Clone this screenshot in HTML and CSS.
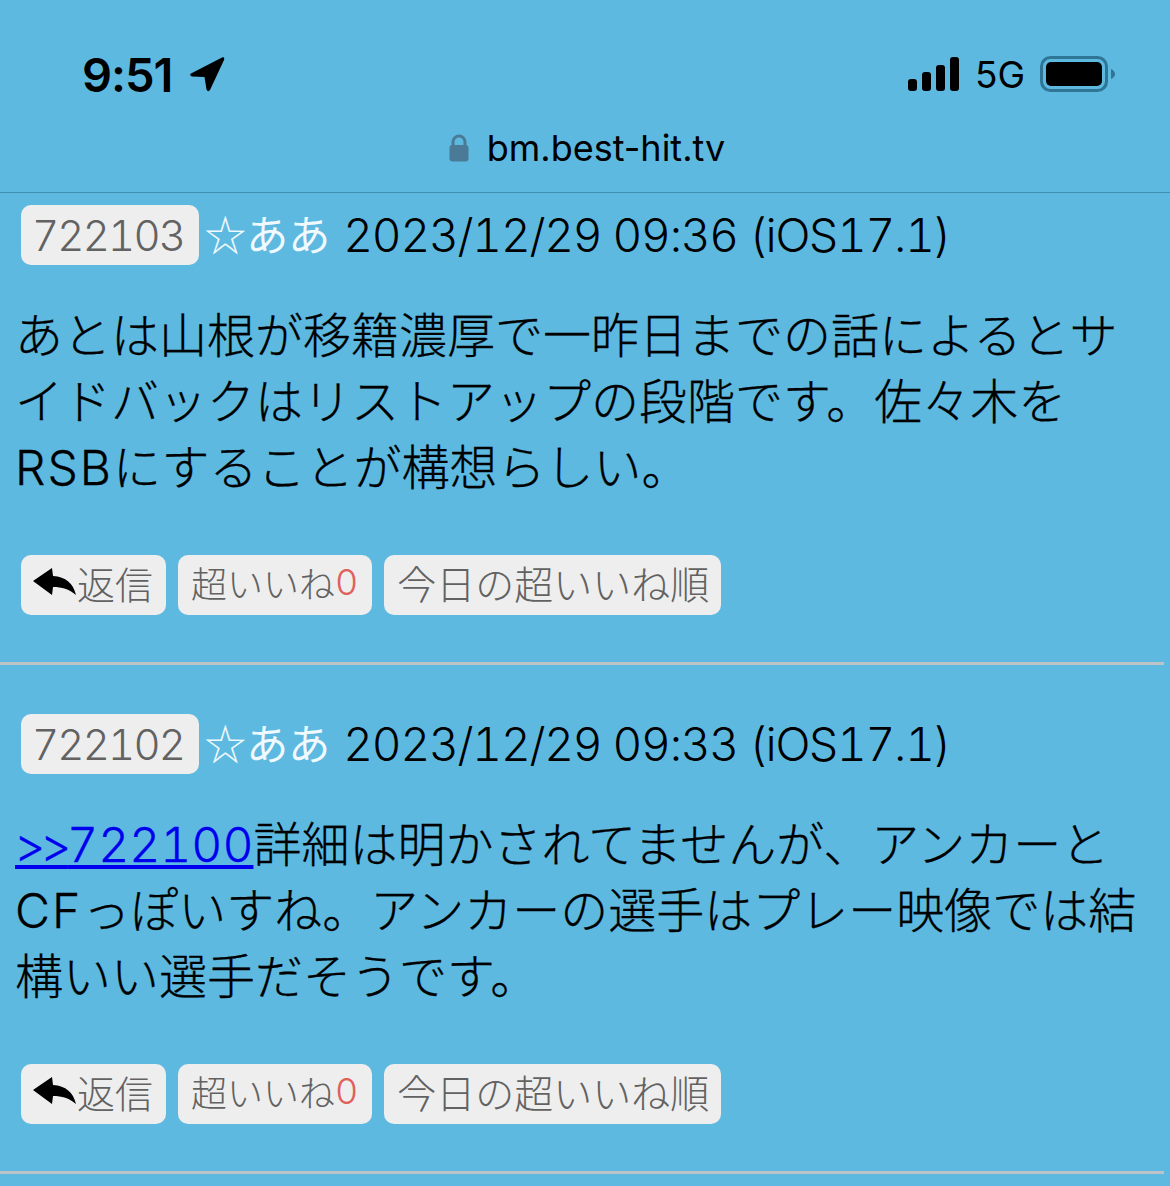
FILE: index.html
```html
<!DOCTYPE html>
<html lang="ja">

<head>
  <meta charset="UTF-8">
  <meta name="viewport" content="width=device-width, initial-scale=1.0">
  <title>bm.best-hit.tv</title>
  <link rel="stylesheet" href="styles.css">
</head>

<body>
  <header class="phone-bar">
    <div class="status-row">
      <div class="status-left">
        <span class="clock">9:51</span>
        <svg class="arrow" width="36" height="36" viewBox="0 0 36 36">
          <path d="M2 17.5 L33 1.5 Q36 0.5 35 4 L21 34 Q19 36.500 17.500 33.500 L15.500 21 L3 20.500 Q0 19 2 17.500 Z" fill="#000" />
        </svg>
      </div>
      <div class="status-right">
        <svg class="signal" width="52" height="34" viewBox="0 0 52 34">
          <rect x="0" y="22" width="9" height="12" rx="3" />
          <rect x="14" y="15" width="9" height="19" rx="3" />
          <rect x="28" y="8" width="9" height="26" rx="3" />
          <rect x="42" y="0" width="9" height="34" rx="3" />
        </svg>
        <span class="network">5G</span>
        <svg class="battery" width="76" height="36" viewBox="0 0 76 36">
          <rect x="1.500" y="1.500" width="65" height="33" rx="9" fill="none" stroke="#2f7596" stroke-width="3" />
          <rect x="6" y="6" width="56" height="24" rx="5" fill="#000" />
          <path d="M71 13 Q75 15 75 18 Q75 21 71 23 Z" fill="#2f7596" />
        </svg>
      </div>
    </div>
    <div class="address">
      <svg class="lock" width="20" height="28" viewBox="0 0 20 28">
        <path d="M4 13 V8 A6 6 0 0 1 16 8 V13" fill="none" stroke="#4a7a96" stroke-width="3" />
        <rect x="0.500" y="11" width="19" height="16.500" rx="3" fill="#4a7a96" />
      </svg>
      <span>bm.best-hit.tv</span>
    </div>
  </header>

  <article class="post post-first">
    <div class="post-meta">
      <span class="pill post-no">722103</span><span class="author">☆ああ</span><span class="date">2023/12/29 09:36 (iOS17.1)</span>
    </div>
    <p class="post-body">あとは山根が移籍濃厚で一昨日までの話によるとサイドバックはリストアップの段階です。佐々木を<span class="latin">RSB</span>にすることが構想らしい。</p>
    <div class="post-actions">
      <a class="pill btn btn-reply">
        <svg class="reply" width="44" height="34" viewBox="0 0 44 34">
          <path d="M0 13 L19 0 L20 8 C33 9 40 15 43 27 C36 21 29 19 20 19 L19 27 Z" fill="#000" />
        </svg>返信
      </a>
      <a class="pill btn btn-small">超いいね<span class="count">0</span></a>
      <a class="pill btn">今日の超いいね順</a>
    </div>
  </article>

  <article class="post">
    <div class="post-meta">
      <span class="pill post-no">722102</span><span class="author">☆ああ</span><span class="date">2023/12/29 09:33 (iOS17.1)</span>
    </div>
    <p class="post-body"><a class="anchor" href="#"><span class="anchor-mark">&gt;&gt;</span>722100</a>詳細は明かされてませんが、アンカーと<span class="latin">CF</span>っぽいすね。アンカーの選手はプレー映像では結構いい選手だそうです。</p>
    <div class="post-actions">
      <a class="pill btn btn-reply">
        <svg class="reply" width="44" height="34" viewBox="0 0 44 34">
          <path d="M0 13 L19 0 L20 8 C33 9 40 15 43 27 C36 21 29 19 20 19 L19 27 Z" fill="#000" />
        </svg>返信
      </a>
      <a class="pill btn btn-small">超いいね<span class="count">0</span></a>
      <a class="pill btn">今日の超いいね順</a>
    </div>
  </article>
</body>

</html>
```

FILE: styles.css
```css
html {
  background-color: #5db9e0;
}

body {
  margin: 0;
  height: 1186px;
  overflow: hidden;
  font-family: Inter, "Noto Sans CJK JP", sans-serif;
  font-weight: 300;
  font-variant-numeric: tabular-nums;
  color: #000;
}

.phone-bar {
  height: 192px;
  border-bottom: 1px solid #3f8fb3;
  font-weight: 400;
  font-variant-numeric: normal;
}

.status-row {
  display: flex;
  justify-content: space-between;
  align-items: center;
  height: 60px;
  padding: 44px 54px 0 82px;
}

.status-left {
  display: flex;
  align-items: center;
  gap: 17px;
}

.clock {
  font-size: 47px;
  font-weight: 600;
  letter-spacing: -1px;
}

.status-right {
  display: flex;
  align-items: center;
  gap: 15px;
}

.network {
  font-size: 37px;
  font-weight: 400;
}

.address {
  display: flex;
  justify-content: center;
  align-items: center;
  gap: 18px;
  margin-top: 22px;
  padding-left: 4px;
  font-size: 36px;
}

.post {
  border-bottom: 3px solid #bcc4c8;
  margin-top: 49px;
  padding-bottom: 47px;
  margin-right: 6px;
}

.post-first {
  margin-top: 12px;
}

.post-meta {
  display: flex;
  align-items: center;
  height: 60px;
  padding-left: 21px;
  font-size: 42px;
  white-space: nowrap;
}

.pill {
  display: inline-flex;
  align-items: center;
  box-sizing: border-box;
  height: 60px;
  padding: 0 13px;
  border-radius: 10px;
  background-color: #eeeeee;
  color: #626262;
}

.post-no {
  padding: 0 15px 0 11px;
  letter-spacing: -1.8px;
}

.author {
  margin: 0 13px 6px 5px;
  color: #f0f9fd;
  font-family: "Noto Sans CJK JP", sans-serif;
  font-weight: 400;
}

.date {
  font-size: 46px;
  letter-spacing: -1.2px;
}

.post-body {
  margin: 38px 0 54px;
  padding: 0 20px 0 15px;
  font-size: 48px;
  line-height: 66px;
  -webkit-text-stroke: 0.3px;
}

.latin {
  letter-spacing: 2px;
}

.anchor {
  color: #0000ee;
}

.anchor-mark {
  letter-spacing: -5px;
}

.post-actions {
  display: flex;
  gap: 12px;
  padding-left: 21px;
  font-size: 39px;
}

.btn {
  padding: 0 12px 6px 13px;
}

.btn-reply {
  padding: 0 13px 6px 12px;
  font-size: 38px;
}

.btn-small {
  padding-right: 14px;
  font-size: 36px;
}

.reply {
  flex: none;
  margin-top: 6px;
}

.count {
  color: #e0605c;
}
```
